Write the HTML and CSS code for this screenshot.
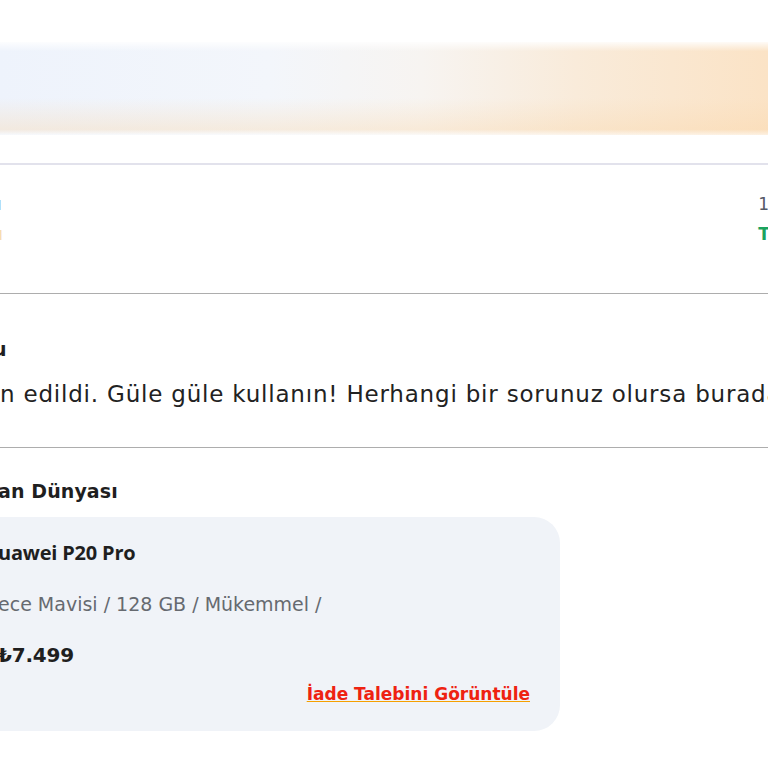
FILE: index.html
```html
<!DOCTYPE html>
<html lang="tr">
<head>
<meta charset="utf-8">
<link rel="stylesheet" href="styles.css">
</head>
<body>
<div class="page">
  <div class="banner"></div>
  <div class="rule-light"></div>
  <div class="status-row">
    <div class="status-col status-left">
      <span class="status-label">ı</span>
      <span class="status-value orange">ı</span>
    </div>
    <div class="status-col status-right">
      <span class="status-label">18</span>
      <span class="status-value green">Te</span>
    </div>
  </div>
  <div class="message">
    <div class="message-title">u</div>
    <p class="message-text">n edildi. Güle güle kullanın! Herhangi bir sorunuz olursa buradan</p>
  </div>
  <div class="seller">
    <div class="seller-name">an Dünyası</div>
    <div class="card">
      <div class="product-name">uawei P20 Pro</div>
      <div class="product-spec">ece Mavisi / 128 GB / Mükemmel /</div>
      <div class="product-price">₺7.499</div>
      <div class="card-actions"><a class="return-link" href="#">İade Talebini Görüntüle</a></div>
    </div>
  </div>
</div>
</body>
</html>
```

FILE: styles.css
```css
html, body {
  margin: 0;
  padding: 0;
  background: #ffffff;
}
body {
  font-family: "DejaVu Sans", "Open Sans", sans-serif;
  color: #1f1f1f;
  overflow: hidden;
}
.page {
  width: 768px;
  height: 768px;
  overflow: hidden;
}
.banner {
  margin-top: 42px;
  height: 93px;
  background:
    linear-gradient(180deg, rgba(255,255,255,0.85) 0%, rgba(255,255,255,0) 10%, rgba(255,255,255,0) 60%, rgba(250,215,170,0.35) 94%, rgba(255,255,255,0.5) 100%),
    linear-gradient(90deg, #eef3fc 0%, #f3f6fb 35%, #f7f4f1 55%, #f9ebda 75%, #fbe3c6 100%);
}
.rule-light {
  margin-top: 28px;
  height: 2px;
  background: #e2e2ec;
}
.status-row {
  display: flex;
  justify-content: space-between;
  height: 128px;
  border-bottom: 1px solid #adadad;
  overflow: hidden;
}
.status-col {
  display: flex;
  flex-direction: column;
  padding-top: 27px;
  gap: 6px;
  white-space: nowrap;
}
.status-left {
  margin-left: -3px;
}
.status-right {
  margin-right: -12px;
}
.status-label {
  font-size: 17px;
  color: #555a66;
  line-height: 24px;
}
.status-value {
  font-size: 17px;
  font-weight: 700;
  line-height: 24px;
}
.orange { color: #f7dcae; }
.green { color: #1aa35e; }
.message {
  border-bottom: 1px solid #adadad;
  padding: 42px 0 39px;
}
.message-title {
  font-size: 19px;
  font-weight: 700;
  margin-left: -7px;
  line-height: 26px;
}
.message-text {
  margin: 18px 0 0 0;
  font-size: 23px;
  letter-spacing: 0.8px;
  line-height: 28px;
  white-space: nowrap;
  color: #222222;
}
.seller {
  padding-top: 30px;
}
.seller-name {
  font-size: 19px;
  font-weight: 700;
  letter-spacing: 0.1px;
  line-height: 26px;
  margin-left: -2px;
}
.card {
  margin-top: 13px;
  margin-left: -30px;
  width: 590px;
  height: 214px;
  box-sizing: border-box;
  background: #f0f3f8;
  border-radius: 26px;
  padding: 22px 30px 0 28px;
  display: flex;
  flex-direction: column;
}
.product-name {
  font-family: "Open Sans", "DejaVu Sans", sans-serif;
  font-size: 20px;
  font-weight: 700;
  letter-spacing: -0.2px;
  line-height: 28px;
}
.product-spec {
  margin-top: 25px;
  font-size: 19px;
  color: #666a70;
  line-height: 24px;
}
.product-price {
  margin-top: 25px;
  font-size: 20px;
  font-weight: 700;
  letter-spacing: -0.2px;
  line-height: 28px;
}
.card-actions {
  display: flex;
  justify-content: flex-end;
  margin-top: 15px;
}
.return-link {
  font-size: 17px;
  font-weight: 700;
  color: #ee2211;
  text-decoration: underline;
  text-decoration-color: #f6a000;
}
```
